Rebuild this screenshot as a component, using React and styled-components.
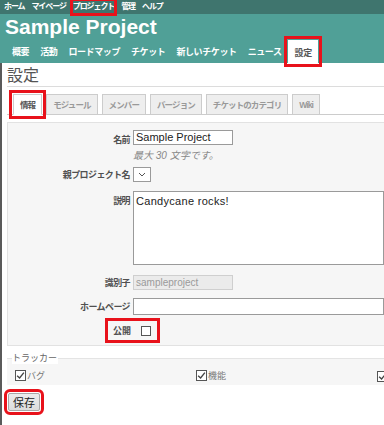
import styled, { createGlobalStyle } from 'styled-components';

const GlobalStyle = createGlobalStyle`
  html, body {
    margin: 0;
    padding: 0;
    overflow: hidden;
    background: #fff;
  }
  body {
    font-family: "Liberation Sans", "Noto Sans CJK JP", sans-serif;
    font-size: 11px;
    color: #484848;
  }
`;

const Page = styled.div`
  width: 384px;
  height: 425px;
  overflow: hidden;
`;

const TopMenu = styled.div`
  height: 14px;
  background: #3f756e;
  display: flex;
  align-items: center;
  gap: 7px;
  padding-left: 4px;
`;

const TopLink = styled.span`
  color: #fff;
  font-size: 8px;
  font-weight: bold;
  line-height: 12px;
  white-space: nowrap;
  letter-spacing: -1.1px;
  outline: ${p => (p.$marked ? '3px solid #e8121b' : 'none')};
  outline-offset: 0px;
`;

const Header = styled.div`
  background: #50a097;
  height: 49px;
  display: flex;
  flex-direction: column;
  justify-content: space-between;
`;

const Title = styled.h1`
  margin: 0;
  padding: 1px 0 0 5px;
  color: #fff;
  font-size: 21px;
  font-weight: bold;
  line-height: 24px;
`;

const MainMenu = styled.div`
  display: flex;
  align-items: flex-end;
  padding-left: 7px;
  white-space: nowrap;
`;

const MenuItem = styled.span`
  flex-shrink: 0;
  color: ${p => (p.$selected ? '#555' : '#fff')};
  background: ${p => (p.$selected ? '#fff' : 'transparent')};
  font-size: 9px;
  font-weight: bold;
  letter-spacing: -0.4px;
  line-height: 12px;
  padding: ${p => (p.$selected ? '7px 6px 4px 7px' : '5px 5px')};
  margin: ${p => (p.$selected ? '0' : '0 1px 0 0')};
  outline: ${p => (p.$selected ? '3px solid #e8121b' : 'none')};
  outline-offset: 1px;
`;

const Content = styled.div`
  border-left: 2px solid #5a5a5a;
  padding: 3px 0 0 5px;
  height: 360px;
`;

const Heading = styled.h2`
  margin: 0;
  font-size: 16px;
  font-weight: normal;
  color: #555;
  line-height: 17px;
  padding: 1px 0 2px;
  border-bottom: 1px solid #dcdcdc;
`;

const Tabs = styled.div`
  display: flex;
  align-items: flex-end;
  gap: 4px;
  margin-top: 7px;
  padding-left: 6px;
  border-bottom: 1px solid #cccccc;
  height: 20px;
`;

const Tab = styled.span`
  font-size: 8.5px;
  font-weight: bold;
  white-space: nowrap;
  letter-spacing: -0.9px;
  color: ${p => (p.$selected ? '#555' : '#999')};
  background: ${p => (p.$selected ? '#fff' : '#eeeeee')};
  border: 1px solid #cccccc;
  border-bottom: ${p => (p.$selected ? '1px solid #fff' : 'none')};
  padding: 4px 6px 3px;
  line-height: 12px;
  margin-bottom: ${p => (p.$selected ? -1 : 0)}px;
  outline: ${p => (p.$selected ? '3px solid #e8121b' : 'none')};
  outline-offset: 1px;
`;

const Box = styled.div`
  margin-top: 7px;
  background: #f6f6f6;
  border: 1px solid #e2e2e2;
  border-right: none;
  padding: 7px 0 2px;
`;

const Row = styled.div`
  display: flex;
  align-items: ${p => p.$align || 'center'};
  margin-top: ${p => p.$mt || 0}px;
`;

const Label = styled.label`
  width: ${p => p.$w || 122}px;
  flex-shrink: 0;
  text-align: right;
  font-weight: bold;
  font-size: 9px;
  letter-spacing: -0.6px;
  color: #505050;
  padding-right: 3px;
  white-space: nowrap;
  ${p => p.$top && 'padding-top: 3px;'}
`;

const Field = styled.div`
  display: flex;
  flex-direction: column;
  gap: 2px;
`;

const Input = styled.div`
  width: ${p => p.$w}px;
  height: ${p => p.$h || 15}px;
  box-sizing: border-box;
  border: 1px solid ${p => (p.$disabled ? '#cfcfcf' : '#9a9a9a')};
  background: ${p => (p.$disabled ? '#ebebeb' : '#fff')};
  color: ${p => (p.$disabled ? '#9a9a9a' : '#222')};
  font-size: ${p => (p.$disabled ? 10 : 11)}px;
  line-height: 13px;
  padding-left: 2px;
  white-space: nowrap;
  overflow: hidden;
`;

const Hint = styled.em`
  font-size: 10px;
  color: #888;
`;

const Select = styled.div`
  width: 18px;
  height: 15px;
  box-sizing: border-box;
  border: 1px solid #9a9a9a;
  background: #fff;
  display: flex;
  align-items: center;
  justify-content: center;
`;

const TextArea = styled.div`
  width: 260px;
  height: 74px;
  box-sizing: border-box;
  border: 1px solid #9a9a9a;
  background: #fff;
  font-size: 11px;
  letter-spacing: 0.3px;
  color: #222;
  padding: 2px;
  line-height: 14px;
`;

const CheckWrap = styled.span`
  display: inline-flex;
  align-items: center;
  gap: 10px;
  padding: 3px 6px 3px 5px;
  border: 3px solid #e8121b;
`;

const CheckBox = styled.span`
  width: 10px;
  height: 10px;
  box-sizing: border-box;
  border: 1px solid #555;
  background: #fff;
  display: inline-flex;
  align-items: center;
  justify-content: center;
  flex-shrink: 0;
`;

const PublicLabel = styled.span`
  font-weight: bold;
  font-size: 9px;
  color: #505050;
`;

const Fieldset = styled.div`
  margin-top: 12px;
  position: relative;
  border-top: 1px solid #e4e4e4;
  background: #f6f6f6;
  height: 27px;
  display: flex;
  align-items: flex-end;
  padding: 0 0 3px 8px;
  box-sizing: border-box;
`;

const Legend = styled.span`
  position: absolute;
  top: -6px;
  left: 5px;
  font-size: 9px;
  color: #666;
  background: #fff;
  line-height: 11px;
  padding-right: 1px;
`;

const Tracker = styled.span`
  display: inline-flex;
  align-items: center;
  gap: 1px;
  width: ${p => p.$w}px;
  font-size: 9px;
  color: #777;
  flex-shrink: 0;
`;

const SaveButton = styled.button`
  display: block;
  margin: 8px 0 0 1px;
  font-family: inherit;
  font-size: 11px;
  color: #222;
  background: linear-gradient(#ececec, #dcdcdc);
  border: 1px solid #a8a8a8;
  border-radius: 2px;
  height: 18px;
  width: 32px;
  padding: 0;
  outline: 3px solid #e8121b;
  outline-offset: 1px;
`;

function Tick({ size = 10 }) {
  return (
    <CheckBox style={{ width: size, height: size }}>
      <svg width={size - 2} height={size - 2} viewBox="0 0 8 8">
        <path d="M1 4.2 L3.2 6.2 L7 1.5" fill="none" stroke="#444" strokeWidth="1.2" />
      </svg>
    </CheckBox>
  );
}

function App() {
  const menu = ['概要', '活動', 'ロードマップ', 'チケット', '新しいチケット', 'ニュース'];
  const tabs = ['モジュール', 'メンバー', 'バージョン', 'チケットのカテゴリ', 'Wiki'];
  return (
    <Page>
      <GlobalStyle />
      <TopMenu>
        <TopLink>ホーム</TopLink>
        <TopLink>マイページ</TopLink>
        <TopLink $marked>プロジェクト</TopLink>
        <TopLink>管理</TopLink>
        <TopLink>ヘルプ</TopLink>
      </TopMenu>
      <Header>
        <Title>Sample Project</Title>
        <MainMenu>
          {menu.map(m => (
            <MenuItem key={m}>{m}</MenuItem>
          ))}
          <MenuItem $selected>設定</MenuItem>
        </MainMenu>
      </Header>
      <Content>
        <Heading>設定</Heading>
        <Tabs>
          <Tab $selected>情報</Tab>
          {tabs.map(t => (
            <Tab key={t}>{t}</Tab>
          ))}
        </Tabs>
        <Box>
          <Row $align="flex-start">
            <Label $top>名前</Label>
            <Field>
              <Input $w={100}>Sample Project</Input>
              <Hint>最大 30 文字です。</Hint>
            </Field>
          </Row>
          <Row $mt={5}>
            <Label>親プロジェクト名</Label>
            <Select>
              <svg width="8" height="5" viewBox="0 0 8 5">
                <path d="M1 1 L4 4 L7 1" fill="none" stroke="#555" strokeWidth="1" />
              </svg>
            </Select>
          </Row>
          <Row $mt={9} $align="flex-start">
            <Label $top>説明</Label>
            <TextArea>Candycane rocks!</TextArea>
          </Row>
          <Row $mt={10}>
            <Label>識別子</Label>
            <Input $w={100} $disabled>sampleproject</Input>
          </Row>
          <Row $mt={8}>
            <Label>ホームページ</Label>
            <Input $w={260} $h={17} />
          </Row>
          <Row $mt={3}>
            <Label $w={94} />
            <CheckWrap>
              <PublicLabel>公開</PublicLabel>
              <CheckBox />
            </CheckWrap>
          </Row>
        </Box>
        <Fieldset>
          <Legend>トラッカー</Legend>
          <Tracker $w={181}><Tick size={11} />バグ</Tracker>
          <Tracker $w={181}><Tick size={11} />機能</Tracker>
          <Tracker $w={40}><Tick size={11} /></Tracker>
        </Fieldset>
        <SaveButton>保存</SaveButton>
      </Content>
    </Page>
  );
}

export default App;
